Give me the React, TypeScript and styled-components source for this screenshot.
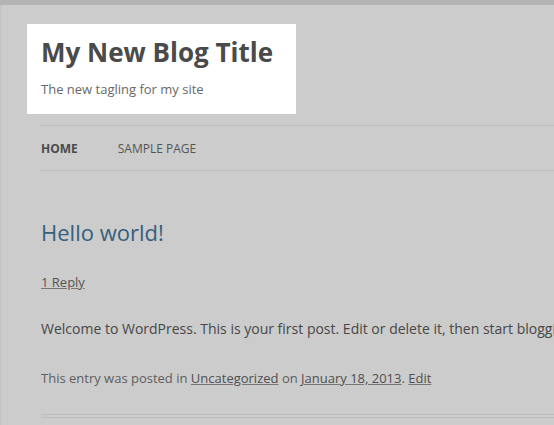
import React from "react";
import styled, { createGlobalStyle } from "styled-components";

const Global = createGlobalStyle`
  html, body { margin: 0; padding: 0; background: #cccccc; overflow: hidden; }
  body { font-family: "Open Sans", "Liberation Sans", sans-serif; color: #444; }
`;

const TopBar = styled.div`
  height: 5px;
  background: #b3b3b3;
`;

const Page = styled.div`
  border-left: 1px solid #c2c2c2;
  padding-left: 40px;
  height: 420px;
  box-sizing: border-box;
  white-space: nowrap;
  overflow: hidden;
`;

const Branding = styled.header`
  margin: 19px 0 0 -14px;
  width: 269px;
  height: 90px;
  box-sizing: border-box;
  padding: 4px 0 0 14px;
  background: #ffffff;
`;

const SiteTitle = styled.h1`
  margin: 0;
  font-size: 26px;
  line-height: 48px;
  font-weight: 700;
  color: #4a4a4a;
`;

const Tagline = styled.p`
  margin: 1px 0 0;
  font-size: 13px;
  line-height: 24px;
  color: #686868;
`;

const Nav = styled.nav`
  margin-top: 11px;
  padding-top: 1px;
  border-top: 1px solid #bebebe;
  border-bottom: 1px solid #bebebe;
  display: flex;
  gap: 40px;
`;

const NavItem = styled.a<{ $current?: boolean }>`
  font-size: 12px;
  line-height: 43px;
  text-transform: uppercase;
  font-weight: ${(p) => (p.$current ? 700 : 400)};
  color: ${(p) => (p.$current ? "#4a4a4a" : "#555555")};
  text-decoration: none;
`;

const Article = styled.article`
  padding-top: 46px;
`;

const PostTitle = styled.h2`
  margin: 0;
  font-size: 22px;
  line-height: 30px;
  font-weight: 400;
  color: #34607e;
`;

const CommentsLink = styled.a`
  display: block;
  margin-top: 23px;
  font-size: 13px;
  line-height: 24px;
  color: #555555;
  text-decoration: underline;
  text-decoration-color: #777;
`;

const Content = styled.p`
  margin: 23px 0 0;
  font-size: 14px;
  line-height: 24px;
  color: #474747;
`;

const Meta = styled.footer`
  margin-top: 25px;
  font-size: 13px;
  line-height: 24px;
  color: #5e5e5e;
`;

const MetaLink = styled.a`
  color: #4f4f4f;
  text-decoration: underline;
  text-decoration-color: #777;
`;

const DoubleRule = styled.div`
  margin-top: 24px;
  height: 2px;
  border-top: 1px solid #bdbdbd;
  border-bottom: 1px solid #bdbdbd;
`;

export default function App() {
  return (
    <>
      <Global />
      <TopBar />
      <Page>
        <Branding>
          <SiteTitle>My New Blog Title</SiteTitle>
          <Tagline>The new tagling for my site</Tagline>
        </Branding>
        <Nav>
          <NavItem $current>Home</NavItem>
          <NavItem>Sample Page</NavItem>
        </Nav>
        <Article>
          <PostTitle>Hello world!</PostTitle>
          <CommentsLink>1 Reply</CommentsLink>
          <Content>
            Welcome to WordPress. This is your first post. Edit or delete it, then start blogging!
          </Content>
          <Meta>
            This entry was posted in <MetaLink>Uncategorized</MetaLink> on{" "}
            <MetaLink>January 18, 2013</MetaLink>. <MetaLink>Edit</MetaLink>
          </Meta>
          <DoubleRule />
        </Article>
      </Page>
    </>
  );
}
